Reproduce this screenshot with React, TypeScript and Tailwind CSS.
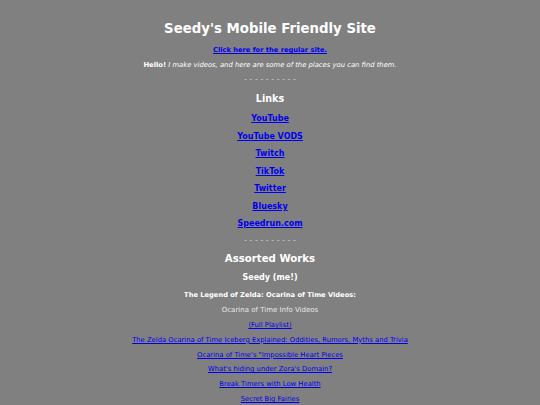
import React from "react";

const links = ["YouTube", "YouTube VODS", "Twitch", "TikTok", "Twitter", "Bluesky", "Speedrun.com"];

const ootVideos = [
  "(Full Playlist)",
  "The Zelda Ocarina of Time Iceberg Explained: Oddities, Rumors, Myths and Trivia",
  "Ocarina of Time's \"Impossible Heart Pieces",
  "What's hiding under Zora's Domain?",
  "Break Timers with Low Health",
  "Secret Big Fairies",
];

const Dashes = ({ className = "" }: { className?: string }) => (
  <div className={`text-[8px] leading-[10px] text-[#c8c8c8] ${className}`}>- - - - - - - - - -</div>
);

export default function App() {
  return (
    <div
      className="min-h-screen w-full bg-[#808080] text-white text-center flex flex-col items-center pt-[21px]"
      style={{ fontFamily: '"DejaVu Sans", Verdana, sans-serif' }}
    >
      <h1 className="text-[13.3px] leading-[16px] font-bold">Seedy's Mobile Friendly Site</h1>
      <a href="#" className="mt-[8px] text-[6.7px] leading-[10px] font-bold text-[#0000ee] underline">
        Click here for the regular site.
      </a>
      <p className="mt-[5px] text-[6.8px] leading-[10px]">
        <b>Hello!</b> <i>I make videos, and here are some of the places you can find them.</i>
      </p>
      <Dashes className="mt-[5px]" />

      <h2 className="mt-[7px] text-[9.6px] leading-[14px] font-bold">Links</h2>
      <div className="mt-[8px] flex flex-col items-center gap-[7.5px]">
        {links.map((l) => (
          <a key={l} href="#" className="text-[8px] leading-[10px] font-bold text-[#0000ee] underline">
            {l}
          </a>
        ))}
      </div>
      <Dashes className="mt-[7px]" />

      <h2 className="mt-[6px] text-[10.2px] leading-[14px] font-bold">Assorted Works</h2>
      <h3 className="mt-[6px] text-[8px] leading-[12px] font-bold">Seedy (me!)</h3>
      <h4 className="mt-[6px] text-[6.7px] leading-[10px] font-bold">The Legend of Zelda: Ocarina of Time Videos:</h4>
      <p className="mt-[5px] text-[7px] leading-[10px] text-[#e8e8e8]">Ocarina of Time Info Videos</p>
      <div className="mt-[5px] flex flex-col items-center gap-[4.8px]">
        {ootVideos.map((v) => (
          <a key={v} href="#" className="text-[6.8px] leading-[10px] text-[#0000ee] underline">
            {v}
          </a>
        ))}
      </div>
    </div>
  );
}
